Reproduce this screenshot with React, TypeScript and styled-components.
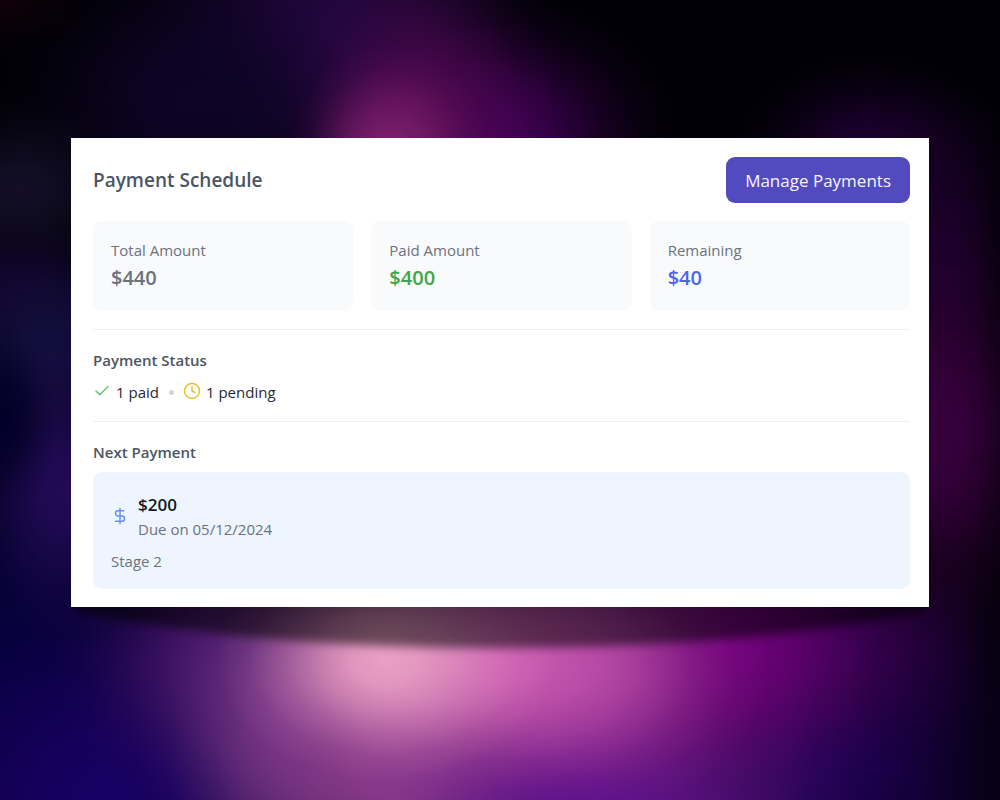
import React from "react";
import styled, { createGlobalStyle } from "styled-components";

const GlobalStyle = createGlobalStyle`
  *, *::before, *::after { box-sizing: border-box; }
  body {
    margin: 0;
    background: #000;
    color: #1f2937;
    font-family: "Open Sans", "Noto Sans", sans-serif;
    font-size: 15px;
    line-height: 24px;
  }
  h2, h3, p, dl, dt, dd, ul { margin: 0; padding: 0; }
`;

const Page = styled.main`
  position: relative;
  isolation: isolate;
  min-height: 100vh;
  display: grid;
  align-content: center;
  padding: 72px 71px 127px;
  overflow: hidden;
`;

const Backdrop = styled.svg`
  position: absolute;
  inset: 0;
  z-index: -1;
  width: 100%;
  height: 100%;
`;

const Card = styled.section`
  background: #fff;
  padding: 19px 19px 18px 22px;
`;

const Header = styled.header`
  display: flex;
  align-items: center;
  justify-content: space-between;
  gap: 16px;
`;

const Title = styled.h2`
  color: #4b5563;
  font-size: 19px;
  font-weight: 600;
  line-height: 28px;
`;

const ManageButton = styled.button`
  border: 0;
  border-radius: 9px;
  height: 46px;
  padding: 2px 19px 0;
  background: #524bbf;
  color: #f5f5ff;
  font: inherit;
  font-size: 17px;
  cursor: pointer;
`;

const Summary = styled.dl`
  display: grid;
  grid-template-columns: repeat(3, 1fr);
  gap: 18px;
  margin-top: 18px;
`;

const Amount = styled.div`
  border-radius: 9px;
  background: #f9fafc;
  padding: 17px 18px;
`;

const AmountLabel = styled.dt`
  color: #6b7280;
`;

const AmountValue = styled.dd<{ $color: string }>`
  color: ${(p) => p.$color};
  font-size: 20px;
  font-weight: 600;
  line-height: 32px;
`;

const Section = styled.section`
  margin-top: 18px;
  border-top: 1px solid #eff0f3;
  padding-top: 18px;
`;

const SectionTitle = styled.h3`
  color: #4b5563;
  font-size: 15px;
  font-weight: 600;
  line-height: 24px;
`;

const StatusList = styled.ul`
  display: flex;
  align-items: center;
  list-style: none;
  margin-top: 9px;
  line-height: 22px;
`;

const StatusItem = styled.li`
  display: flex;
  align-items: center;
  gap: 5px;

  & + &::before {
    content: "";
    width: 5px;
    height: 5px;
    margin: 0 4px 0 10px;
    border-radius: 50%;
    background: #d1d5db;
  }
`;

const Icon = styled.svg<{ $color: string }>`
  flex: none;
  width: 18px;
  height: 18px;
  margin-bottom: 2px;
  fill: none;
  stroke: ${(p) => p.$color};
  stroke-width: 2;
  stroke-linecap: round;
  stroke-linejoin: round;
`;

const NextPayment = styled.div`
  margin-top: 8px;
  border-radius: 9px;
  background: #eef5ff;
  padding: 20px 18px 16px;
`;

const Due = styled.div`
  display: flex;
  align-items: center;
  gap: 9px;
`;

const DueAmount = styled.p`
  color: #111827;
  font-size: 17px;
  font-weight: 600;
  line-height: 25px;
`;

const Muted = styled.p`
  color: #6b7280;
`;

const Stage = styled(Muted)`
  margin-top: 8px;
`;

const amounts = [
  { label: "Total Amount", value: "$440", color: "#6b7280" },
  { label: "Paid Amount", value: "$400", color: "#3fa64b" },
  { label: "Remaining", value: "$40", color: "#4d66ee" },
];

/* x, y, horizontal radius, vertical radius, colour; painted back to front */
const glows: [number, number, number, number, string][] = [
  [0, 640, 260, 330, "#00002f"],
  [110, 800, 340, 280, "#180064"],
  [830, 760, 240, 240, "#1c0050"],
  [850, 650, 180, 130, "#2c0044"],
  [200, 660, 150, 150, "#3c1064"],
  [280, 710, 150, 220, "#6a3080"],
  [560, 740, 320, 280, "#7a1c8a"],
  [720, 645, 200, 170, "#70007a"],
  [400, 750, 230, 250, "#924090"],
  [600, 840, 280, 150, "#5c108e"],
  [600, 670, 170, 140, "#a43a9a"],
  [500, 660, 190, 130, "#cc5cb2"],
  [385, 660, 170, 120, "#eaa0c4"],
  [330, 30, 230, 240, "#22063f"],
  [190, 100, 200, 160, "#0d0426"],
  [490, 140, 190, 150, "#400056"],
  [420, 140, 140, 210, "#50084f"],
  [390, 155, 100, 110, "#7c1f6c"],
  [870, 160, 140, 110, "#200034"],
  [20, 190, 130, 100, "#130e26"],
  [10, 295, 130, 90, "#12042c"],
  [50, 345, 120, 120, "#120e3c"],
  [65, 490, 120, 180, "#220a56"],
  [0, 420, 60, 100, "#02002a"],
  [940, 240, 90, 160, "#1a0028"],
  [940, 430, 120, 250, "#38003e"],
  [0, 0, 100, 60, "#0e0009"],
];

function Glows() {
  return (
    <Backdrop viewBox="0 0 1000 800" preserveAspectRatio="none" aria-hidden="true">
      <defs>
        {glows.map(([, , , , color], i) => (
          <radialGradient id={`glow${i}`} key={i}>
            <stop offset="0" stopColor={color} />
            <stop offset="0.2" stopColor={color} stopOpacity="0.9" />
            <stop offset="0.4" stopColor={color} stopOpacity="0.65" />
            <stop offset="0.6" stopColor={color} stopOpacity="0.34" />
            <stop offset="0.8" stopColor={color} stopOpacity="0.1" />
            <stop offset="1" stopColor={color} stopOpacity="0" />
          </radialGradient>
        ))}
        <filter id="soft" x="-10%" y="-50%" width="120%" height="200%">
          <feGaussianBlur stdDeviation="5" />
        </filter>
      </defs>
      <rect width="1000" height="800" fill="#010006" />
      {glows.map(([x, y, rx, ry], i) => (
        <ellipse key={i} cx={x} cy={y} rx={rx} ry={ry} fill={`url(#glow${i})`} />
      ))}
      <path
        d="M76 590H924V612Q740 648 500 648Q260 648 76 612Z"
        fill="#050a00"
        fillOpacity="0.52"
        filter="url(#soft)"
      />
    </Backdrop>
  );
}

export default function App() {
  return (
    <>
      <GlobalStyle />
      <Page>
        <Glows />
        <Card>
          <Header>
            <Title>Payment Schedule</Title>
            <ManageButton type="button">Manage Payments</ManageButton>
          </Header>
          <Summary>
            {amounts.map((a) => (
              <Amount key={a.label}>
                <AmountLabel>{a.label}</AmountLabel>
                <AmountValue $color={a.color}>{a.value}</AmountValue>
              </Amount>
            ))}
          </Summary>
          <Section>
            <SectionTitle>Payment Status</SectionTitle>
            <StatusList>
              <StatusItem>
                <Icon viewBox="0 0 24 24" $color="#5bca71" aria-hidden="true">
                  <path d="M20 6 9 17l-5-5" />
                </Icon>
                1 paid
              </StatusItem>
              <StatusItem>
                <Icon viewBox="0 0 24 24" $color="#eac12c" aria-hidden="true">
                  <circle cx="12" cy="12" r="10" />
                  <path d="M12 6v6l4 2" />
                </Icon>
                1 pending
              </StatusItem>
            </StatusList>
          </Section>
          <Section>
            <SectionTitle>Next Payment</SectionTitle>
            <NextPayment>
              <Due>
                <Icon viewBox="0 0 24 24" $color="#6690fa" aria-hidden="true">
                  <path d="M12 2v20M17 5H9.500a3.500 3.500 0 0 0 0 7h5a3.500 3.500 0 0 1 0 7H6" />
                </Icon>
                <div>
                  <DueAmount>$200</DueAmount>
                  <Muted>Due on 05/12/2024</Muted>
                </div>
              </Due>
              <Stage>Stage 2</Stage>
            </NextPayment>
          </Section>
        </Card>
      </Page>
    </>
  );
}
